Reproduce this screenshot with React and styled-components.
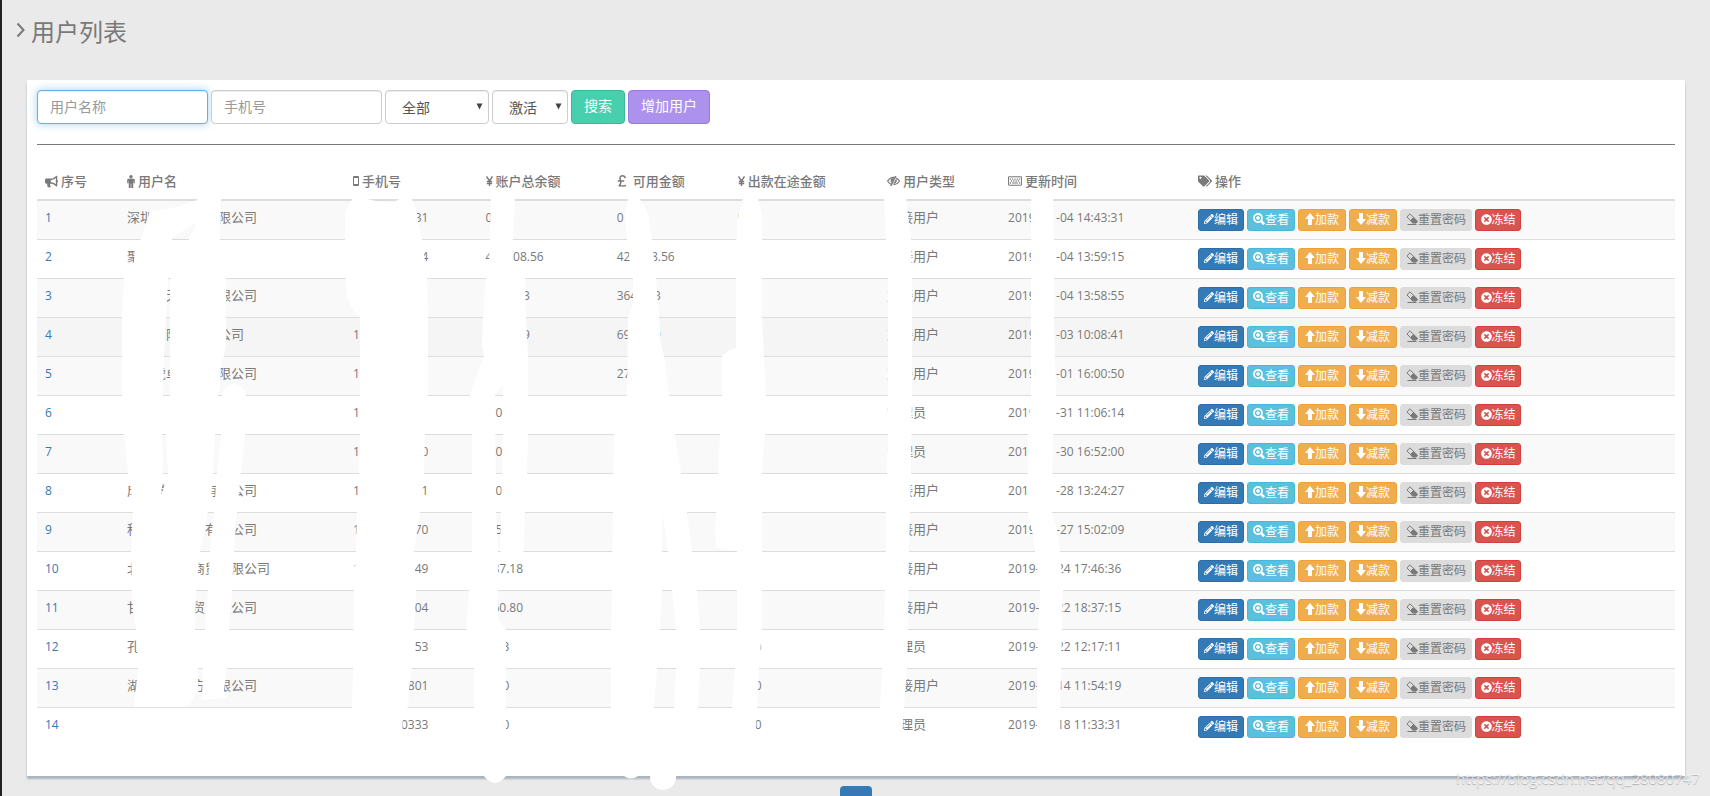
import React from 'react'
import styled, { createGlobalStyle, css } from 'styled-components'
import { FaBullhorn, FaRegKeyboard, FaTags, FaPencilAlt, FaTimesCircle } from 'react-icons/fa'

// blanked-out characters: one full-width or one digit wide
const W = '\u3000'
const D = '\u2007'

const users = [
  { name: `深圳${W.repeat(5)}限公司`, phone: `${D.repeat(9)}31`, total: '0.00', usable: '0', type: '对接用户', date: `2019${D.repeat(3)}-04 14:43:31` },
  { name: '聚', phone: `${D.repeat(10)}4`, total: `42${D.repeat(2)}08.56`, usable: `42${D.repeat(2)}08.56`, type: '对接用户', date: `2019${D.repeat(3)}-04 13:59:15` },
  { name: `${W.repeat(3)}天${W.repeat(3)}限公司`, phone: '', total: `364${D}.${D}3`, usable: `364${D}.${D}3`, type: '对接用户', date: `2019${D.repeat(3)}-04 13:58:55` },
  { name: `${W.repeat(3)}阳${W.repeat(3)}公司`, phone: '1', total: `69${D}${D}.${D}9`, usable: `69${D}${D}.${D}9`, type: '对接用户', date: `2019${D.repeat(3)}-03 10:08:41`, hover: true },
  { name: `${W.repeat(2)}虎卓${W.repeat(3)}限公司`, phone: '1', total: '', usable: '27', type: '对接用户', date: `2019${D.repeat(3)}-01 16:00:50` },
  { name: '', phone: '1', total: '0.0', usable: '', type: '管理员', date: `2019${D.repeat(3)}-31 11:06:14` },
  { name: '', phone: `1${D.repeat(9)}0`, total: '0.0', usable: '', type: '管理员', date: `2019${D.repeat(3)}-30 16:52:00` },
  { name: `成${W}博${W.repeat(3)}有限公司`, phone: `1${D.repeat(9)}1`, total: '0.0', usable: '', type: '对接用户', date: `2019${D.repeat(3)}-28 13:24:27` },
  { name: `科${W.repeat(5)}有限公司`, phone: `1${D.repeat(8)}70`, total: `${D}.5`, usable: '', type: '对接用户', date: `2019${D.repeat(3)}-27 15:02:09` },
  { name: `北${W.repeat(4)}商贸有限公司`, phone: `1${D.repeat(8)}49`, total: `${D}87.18`, usable: '', type: '对接用户', date: `2019-${D.repeat(2)}-24 17:46:36` },
  { name: `甘${W.repeat(4)}贸${W}限公司`, phone: `${D.repeat(9)}04`, total: `${D}60.80`, usable: '', type: '对接用户', date: `2019-0${D}-22 18:37:15` },
  { name: '孔', phone: `${D.repeat(9)}53`, total: `0.${D}3`, usable: '', type: '管理员', date: `2019-${D.repeat(2)}-22 12:17:11` },
  { name: `湖${W.repeat(4)}方${W}限公司`, phone: `${D.repeat(8)}801`, total: '0.00', usable: '', type: '对接用户', date: `2019-${D.repeat(2)}-14 11:54:19` },
  { name: '', phone: `${D.repeat(7)}0333`, total: '0.00', usable: '', type: '管理员', date: `2019-${D.repeat(2)}-18 11:33:31` },
]

const columns = [
  { label: '序号', width: '5%', icon: <FaBullhorn size={13} /> },
  { label: '用户名', width: '13.8%', icon: <MaleIcon /> },
  { label: '手机号', width: '8.1%', icon: <PhoneIcon /> },
  { label: '账户总余额', width: '8%', icon: <YenIcon /> },
  { label: '可用金额', width: '7.4%', icon: <PoundIcon />, wide: true },
  { label: '出款在途金额', width: '9.1%', icon: <YenIcon /> },
  { label: '用户类型', width: '7.4%', icon: <EyeCloseIcon /> },
  { label: '更新时间', width: '11.6%', icon: <FaRegKeyboard size={14} /> },
  { label: '操作', width: 'auto', icon: <FaTags size={14} /> },
]

function AngleIcon() {
  return (
    <svg width="10" height="16" viewBox="0 0 10 16">
      <path d="m1.500 1.500 6 6.500-6 6.500" fill="none" stroke="currentColor" strokeWidth="2" />
    </svg>
  )
}

function MaleIcon() {
  return (
    <svg width="8" height="13" viewBox="0 0 8 13">
      <circle cx="4" cy="1.800" r="1.700" fill="currentColor" />
      <path d="M1.500 3.800h5q1.300 0 1.300 1.300v3.200H6.500V5.800h-.3V13H4.300V8.800h-.6V13H1.800V5.800h-.3v2.500H.2V5.100q0-1.300 1.300-1.300z" fill="currentColor" />
    </svg>
  )
}

function PhoneIcon() {
  return (
    <svg width="6" height="10" viewBox="0 0 6 10">
      <path d="M.5.5h5v9h-5zM.5 1.500h5M.5 8.500h5" fill="none" stroke="currentColor" />
    </svg>
  )
}

function YenIcon() {
  return (
    <svg width="7" height="10" viewBox="0 0 7 10">
      <path d="m.5.5 3 4.500 3-4.500M3.500 5v5M.8 5.500h5.400M.8 7.500h5.400" fill="none" stroke="currentColor" strokeWidth="1.400" />
    </svg>
  )
}

function PoundIcon() {
  return (
    <svg width="10" height="12" viewBox="0 0 10 12">
      <path d="M8.300 3.200C8 1.500 7 .8 5.500.8 3.800.8 2.800 2 3 3.500c.2 1.500 1 2.300.8 4-.1 1.500-1 2.700-2 3.500 2-.8 4.700.8 7.200-.6M.8 6h6.400" fill="none" stroke="currentColor" strokeWidth="1.500" />
    </svg>
  )
}

function EyeCloseIcon() {
  return (
    <svg width="13" height="10" viewBox="0 0 13 10">
      <path d="M7.500 1.400C4 1 2 3 .6 5c.8 1.400 2 2.500 3.400 3.200M9.300 2c1.400.8 2.400 1.900 3.100 3C11 7.300 9 8.500 6.500 8.600" fill="none" stroke="currentColor" strokeWidth="1.200" />
      <path d="M8.800 0 3.800 10" stroke="currentColor" strokeWidth="1.500" />
      <path d="M7 1.800C3.600 1.800 3 4.600 4.300 7.200zM9.300 2.500 6.300 8C9.500 7.500 10.500 5 9.300 2.500z" fill="currentColor" />
    </svg>
  )
}

function ZoomIcon() {
  return (
    <svg width="12" height="12" viewBox="0 0 12 12">
      <circle cx="5" cy="5" r="4" fill="none" stroke="currentColor" strokeWidth="1.800" />
      <path d="M5 3v4M3 5h4" stroke="currentColor" strokeWidth="1.500" />
      <path d="m8 8 3.200 3.200" stroke="currentColor" strokeWidth="2.600" />
    </svg>
  )
}

function ArrowIcon({ down }) {
  return (
    <svg width="10" height="12" viewBox="0 0 10 12">
      <path d={down ? 'M3 0h4v6h3l-5 6-5-6h3z' : 'M3 12h4V6h3L5 0 0 6h3z'} fill="currentColor" />
    </svg>
  )
}

function EraserIcon() {
  return (
    <svg width="12" height="12" viewBox="0 0 12 12">
      <path d="M4 .8.900 3.900 4.500 7.500 7.600 4.400z" fill="none" stroke="currentColor" />
      <path d="m7.600 4.400 3.700 3.700v.8l-1.200 1.200H6.600L4.500 7.500z" fill="currentColor" stroke="currentColor" />
      <path d="M1.500 11.500h9" stroke="currentColor" />
    </svg>
  )
}

const actions = [
  { label: '编辑', kind: 'primary', width: '46px', icon: <FaPencilAlt size={10} /> },
  { label: '查看', kind: 'info', width: '48px', icon: <ZoomIcon /> },
  { label: '加款', kind: 'warning', width: '48px', icon: <ArrowIcon /> },
  { label: '减款', kind: 'warning', width: '48px', icon: <ArrowIcon down /> },
  { label: '重置密码', kind: 'plain', width: '72px', icon: <EraserIcon /> },
  { label: '冻结', kind: 'danger', width: '46px', icon: <FaTimesCircle size={11} /> },
]

// white brush strokes over the private values
const strokes = [
  'M150 211 174 208 197 200 197 222 172 238 172 262 168 280 166 317 164 356 163 395 162 434 163 473 160 512 160 707 134 707 138 668 136 629 133 612 132 590 131 551 133 512 131 490 128 473 124 434 122 395 122 317 124 278 134 262 135 245 141 239Z',
  'M197 198H221L220 239 226 278V343L224 356 221 362 220 385 218 395 215 434 213 473 212 490 208 512 200 551 196 590 195 629 198 668V690L188 707H158L160 500 168 473 166 434 170 395V280L189 250V239L197 222Z',
  'M222 395Q224 385 234 384 244 385 246 395L245 434 241 473 237 512 234 551 232 590 229 629 227 668 224 690 226 698 202 700 203 668 205 629 208 590 210 551 214 512 217 473 221 434Z',
  'M345 239V215Q348 202 354 198L363 198 380 202 394 202 401 198 411 198Q417 206 418 222L422 239 427 278 428 317V395L425 434 424 473 420 512 414 551 416 590 414 629 412 668 409 690 408 707 403 712 402 740H350L352 707 353 668 354 590 356 551 357 512 359 473 360 434V317Q348 308 346 290Z',
  'M491 198H515L513 240 512 262 525 278 526 317 528 356 528 434 527 473 525 512 524 551Q512 565 500 551L503 434V385L495 395 496 512 498 551V620L506 629 506 740 506 776Q495 790 484 776L474 707V635L466 629 469 590 472 551V434L470 395 477 375 484 356 482 345 483 317 486 278 489 262Z',
  'M628 198H639Q648 208 649 222L652 239 656 278 659 317 661 345 664 356 669 395 675 434 681 473 687 512 692 551 697 590 700 629V668L698 707 676 777A13 13 0 0 1 650 777L674 707 676 668V629L672 590 668 551 662 512V590L660 629 657 668 654 707 638 776Q631 781 624 776L611 707V629L612 590 613 512 614 434 627 395 628 317 633 305 633 278 630 262 627 239 625 215Z',
  'M743 198H758L762 215V317L764 356 766 395 765 434 762 473V629L759 668 757 707 755 740H730L732 707 735 668 737 629V551L716 548 715 530 718 473 720 434 722 395V356L729 350 736 348V250L737 222Z',
  'M884 198H906L911 239 912 278V395L911 473 909 551 908 629 907 668 904 707 902 740H878L880 707 884 629 886 551 886 512 888 434V278L886 239Z',
  'M1031 198H1053L1054 239V317L1055 356 1056 395 1053 434 1052 512 1057 530 1060 551 1063 590 1062 629 1061 668 1060 740H1037V668L1038 629 1040 590 1035 551 1032 530 1028 512V434L1031 395V239Z',
]

function App() {
  return (
    <Page>
      <GlobalStyle />
      <Title><AngleIcon />用户列表</Title>
      <Panel>
        <Filters onSubmit={(e) => e.preventDefault()}>
          <TextInput aria-label="用户名称" placeholder="用户名称" $focused />
          <TextInput aria-label="手机号" placeholder="手机号" />
          <SelectWrap>
            <Select aria-label="类型" $width="104px"><option>全部</option></Select>
            <Caret />
          </SelectWrap>
          <SelectWrap>
            <Select aria-label="状态" $width="76px"><option>激活</option></Select>
            <Caret />
          </SelectWrap>
          <Button $kind="search">搜索</Button>
          <Button type="button" $kind="add">增加用户</Button>
        </Filters>
        <Line />
        <Table>
          <colgroup>
            {columns.map((c) => <Col key={c.label} $width={c.width} />)}
          </colgroup>
          <thead>
            <tr>
              {columns.map((c) => (
                <th key={c.label}><Heading $wide={c.wide}>{c.icon}{c.label}</Heading></th>
              ))}
            </tr>
          </thead>
          <tbody>
            {users.map((u, i) => (
              <Row key={i} $hover={u.hover}>
                <Num><a href="#user">{i + 1}</a></Num>
                <td>{u.name}</td>
                <Num>{u.phone}</Num>
                <Num>{u.total}</Num>
                <Num>{u.usable}</Num>
                <Num>0.00</Num>
                <td>{u.type}</td>
                <Num>{u.date}</Num>
                <td>
                  <Actions>
                    {actions.map((a) => (
                      <SmallButton key={a.label} type="button" $kind={a.kind} $width={a.width}>{a.icon}{a.label}</SmallButton>
                    ))}
                  </Actions>
                </td>
              </Row>
            ))}
          </tbody>
        </Table>
        <Brush width="1658" height="716" viewBox="27 80 1658 716">
          {strokes.map((d) => <path key={d} d={d} fill="#fff" />)}
        </Brush>
      </Panel>
      <Pager>
        <PageLink href="#page" aria-label="第一页" />
      </Pager>
      <Watermark>https://blog.csdn.net/qq_28080747</Watermark>
    </Page>
  )
}

function Caret() {
  return (
    <Arrow width="7" height="7" viewBox="0 0 7 7"><path d="M.5.5h6L3.500 6.500z" fill="#444" /></Arrow>
  )
}

export default App

const GlobalStyle = createGlobalStyle`
  * {
    box-sizing: border-box;
  }
  body {
    margin: 0;
    background: #eaeaea;
    color: #797979;
    font-family: "Open Sans", "Noto Sans CJK SC", sans-serif;
    font-size: 13px;
  }
  button, input, select {
    font-family: inherit;
  }
`;

const Page = styled.main`
  position: relative;
  height: 100vh;
  overflow: hidden;
  padding: 0 25px;
  border-left: 2px solid #222;
`;

const Title = styled.h3`
  display: flex;
  align-items: center;
  gap: 5px;
  height: 60px;
  margin: 0 -11px 20px;
  font-size: 24px;
  font-weight: 400;
`;

const Panel = styled.section`
  position: relative;
  padding: 10px 10px 30px;
  background: #fff;
  box-shadow: 0 3px 2px #aab2bd;
`;

const Filters = styled.form`
  display: flex;
  gap: 3px;
`;

const field = css`
  height: 34px;
  border: 1px solid #ccc;
  border-radius: 4px;
  background: #fff;
  font-size: 14px;
  box-shadow: inset 0 1px 1px rgba(0, 0, 0, 0.075);
`;

const TextInput = styled.input`
  ${field}
  width: 171px;
  padding: 4px 12px 6px;
  outline: none;
  &::placeholder {
    color: #999;
    opacity: 1;
  }
  ${(p) => p.$focused && css`
    border-color: #66afe9;
    box-shadow: inset 0 1px 1px rgba(0, 0, 0, 0.075), 0 0 8px rgba(102, 175, 233, 0.6);
  `}
`;

const SelectWrap = styled.div`
  position: relative;
`;

const Select = styled.select`
  ${field}
  width: ${(p) => p.$width};
  padding: 4px 16px;
  color: #555;
  appearance: none;
`;

const Arrow = styled.svg`
  position: absolute;
  top: 13px;
  right: 6px;
  pointer-events: none;
`;

const kinds = {
  search: css`color: #fff; background: #48cfad; border-color: #3cb798;`,
  add: css`color: #fff; background: #ac92ec; border-color: #967adc;`,
  primary: css`color: #fff; background: #337ab7; border-color: #2e6da4;`,
  info: css`color: #fff; background: #5bc0de; border-color: #46b8da;`,
  warning: css`color: #fff; background: #f0ad4e; border-color: #eea236;`,
  danger: css`color: #fff; background: #d9534f; border-color: #d43f3a;`,
  plain: css`color: #797979; background: #dcdcdc; border-color: #dcdcdc;`,
};

const Button = styled.button`
  height: 34px;
  padding: 0 12px 4px;
  border: 1px solid;
  border-radius: 4px;
  font-size: 14px;
  ${(p) => kinds[p.$kind]}
`;

const Line = styled.hr`
  margin: 20px 0;
  border: 0;
  border-top: 1px solid #797979;
`;

const Table = styled.table`
  width: 100%;
  table-layout: fixed;
  border-spacing: 0;
  line-height: 18px;
  th {
    height: 36px;
    padding: 7px 8px 9px;
    border-bottom: 2px solid #ddd;
    font-weight: 500;
  }
  td {
    height: 39px;
    padding: 7px 8px 8px;
    border-top: 1px solid #ddd;
    vertical-align: top;
    white-space: pre;
  }
  tbody tr:first-child td {
    height: 38px;
    border-top: 0;
  }
`;

const Col = styled.col`
  width: ${(p) => p.$width};
`;

const Heading = styled.span`
  display: flex;
  align-items: center;
  gap: ${(p) => (p.$wide ? '6px' : '3px')};
  white-space: nowrap;
`;

const Row = styled.tr`
  &:nth-child(odd) {
    background: #f9f9f9;
  }
  ${(p) => p.$hover && css`background: #f5f5f5;`}
`;

const Num = styled.td`
  font-size: 12px;
  line-height: 20px;
  a {
    color: #337ab7;
    text-decoration: none;
  }
`;

const Actions = styled.div`
  display: flex;
  gap: 3px;
  padding-top: 1px;
`;

const SmallButton = styled.button`
  display: flex;
  align-items: center;
  justify-content: center;
  flex: none;
  width: ${(p) => p.$width};
  height: 22px;
  padding: 0 0 2px;
  border: 1px solid;
  border-radius: 3px;
  font-size: 12px;
  white-space: nowrap;
  ${(p) => kinds[p.$kind]}
`;

const Brush = styled.svg`
  position: absolute;
  top: 0;
  left: 0;
  pointer-events: none;
`;

const Pager = styled.nav`
  display: flex;
  justify-content: center;
  padding-top: 10px;
`;

const PageLink = styled.a`
  width: 32px;
  height: 34px;
  border-radius: 4px;
  background: #337ab7;
`;

const Watermark = styled.span`
  position: absolute;
  right: 10px;
  bottom: 8px;
  color: rgba(255, 255, 255, 0.7);
  font-size: 15px;
  line-height: 20px;
  text-shadow: 0 1px 1px rgba(0, 0, 0, 0.25);
`;
